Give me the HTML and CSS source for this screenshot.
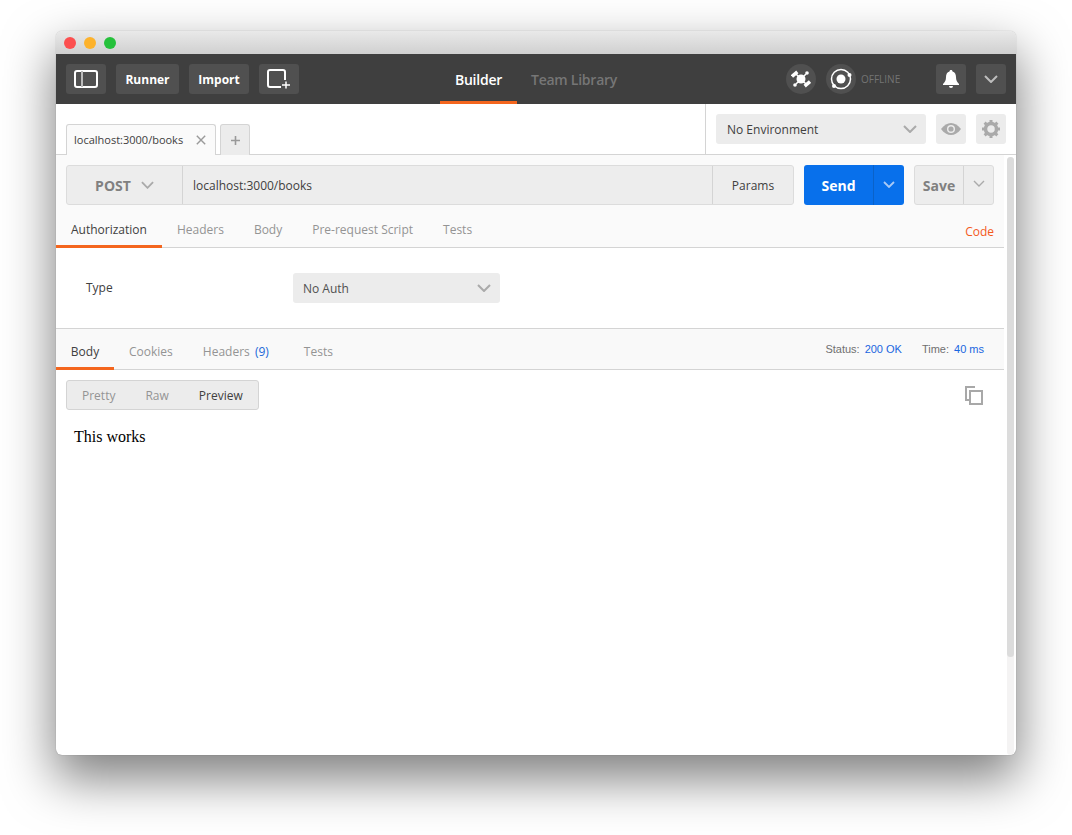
FILE: index.html
```html
<!DOCTYPE html>
<html lang="en">
<head>
<meta charset="utf-8">
<title>Postman</title>
<link rel="stylesheet" href="styles.css">
</head>
<body>
<div class="window">
  <div class="titlebar">
    <span class="light red"></span><span class="light yellow"></span><span class="light green"></span>
  </div>
  <header class="toolbar">
    <div class="tool-left">
      <button class="tbtn icon-btn"><svg width="24" height="18" viewBox="0 0 24 18" fill="none" stroke="#fff" stroke-width="2"><rect x="1" y="1" width="22" height="16" rx="2"/><path d="M8 1v16" stroke="#bbb"/></svg></button>
      <button class="tbtn text-btn runner">Runner</button>
      <button class="tbtn text-btn import">Import</button>
      <button class="tbtn icon-btn"><svg width="24" height="20" viewBox="0 0 24 20" fill="none" stroke="#fff" stroke-width="2"><path d="M14 18H3a2 2 0 0 1-2-2V3a2 2 0 0 1 2-2h13a2 2 0 0 1 2 2v8"/><path d="M15 16h8M19 12.500v7" stroke-width="1.500"/></svg></button>
    </div>
    <nav class="tool-center">
      <span class="nav-item active">Builder</span>
      <span class="nav-item">Team Library</span>
    </nav>
    <div class="tool-right">
      <span class="round"><svg width="20" height="20" viewBox="0 0 20 20" fill="#fff"><circle cx="10" cy="10" r="4.500"/><path d="M10 10L4 4M10 10l6 6M10 10l-5 5M10 10l5-5" stroke="#fff" stroke-width="1.500"/><rect x="0" y="3.500" width="7" height="3.500" transform="rotate(-40 3.500 5)"/><rect x="13" y="13" width="7" height="3.500" transform="rotate(-40 16.500 15)"/><circle cx="4" cy="16" r="1.800"/><circle cx="16" cy="4" r="1.800"/></svg></span>
      <span class="round second"><svg width="24" height="24" viewBox="0 0 24 24"><circle cx="12" cy="12" r="9.500" fill="none" stroke="#fff" stroke-width="1.500"/><circle cx="12" cy="12" r="4.500" fill="#fff"/><circle cx="20.500" cy="8" r="2" fill="#fff"/><circle cx="5" cy="19" r="2" fill="#fff"/></svg></span>
      <span class="offline">OFFLINE</span>
      <button class="tbtn square bell"><svg width="16" height="18" viewBox="0 0 16 18" fill="#fff"><path d="M8 0c1 0 1.500.7 1.500 1.500C12 2.300 13 4.500 13 7c0 3.500 1 5 3 7v1H0v-1c2-2 3-3.500 3-7 0-2.500 1-4.700 3.500-5.500C6.500.7 7 0 8 0z"/><path d="M6 16h4a2 2 0 0 1-4 0z"/></svg></button>
      <button class="tbtn square"><svg width="14" height="8" viewBox="0 0 14 8" fill="none" stroke="#bdbdbd" stroke-width="2"><path d="M1 1l6 6 6-6"/></svg></button>
    </div>
  </header>
  <div class="tabrow">
    <div class="tabs">
      <div class="tab"><span>localhost:3000/books</span><svg class="close" width="10" height="10" viewBox="0 0 10 10" stroke="#9a9a9a" stroke-width="1.400"><path d="M.8.800l8.400 8.400M9.200.800L.8 9.200"/></svg></div>
      <div class="tab-add"><svg width="9" height="9" viewBox="0 0 9 9" stroke="#999" stroke-width="1.600"><path d="M0 4.500h9M4.500 0v9"/></svg></div>
    </div>
    <div class="env">
      <div class="env-select"><span>No Environment</span><svg width="14" height="8" viewBox="0 0 14 8" fill="none" stroke="#aaa" stroke-width="2"><path d="M1 1l6 6 6-6"/></svg></div>
      <button class="env-btn"><svg width="20" height="12" viewBox="0 0 20 12"><path d="M0 6c3-4 6.500-6 10-6s7 2 10 6c-3 4-6.500 6-10 6S3 10 0 6z" fill="#aaa"/><circle cx="10" cy="6" r="4" fill="#ececec"/><circle cx="10" cy="6" r="2.600" fill="#aaa"/></svg></button>
      <button class="env-btn"><svg width="18" height="18" viewBox="0 0 18 18"><circle cx="9" cy="9" r="5.500" fill="none" stroke="#aaa" stroke-width="3.500"/><path d="M9 0v18M0 9h18M2.600 2.600l12.800 12.800M15.400 2.600L2.600 15.400" stroke="#aaa" stroke-width="3" stroke-dasharray="3 12"/></svg></button>
    </div>
  </div>
  <div class="content">
    <main class="panes">
      <section class="request">
        <div class="urlbar">
          <div class="urlgroup">
            <div class="method"><span>POST</span><svg width="13" height="8" viewBox="0 0 14 8" fill="none" stroke="#aaa" stroke-width="2"><path d="M1 1l6 6 6-6"/></svg></div>
            <div class="url">localhost:3000/books</div>
            <div class="params">Params</div>
          </div>
          <div class="send"><span class="send-label">Send</span><span class="send-arrow"><svg width="12" height="7" viewBox="0 0 12 7" fill="none" stroke="#a9c9f5" stroke-width="1.800"><path d="M1 1l5 5 5-5"/></svg></span></div>
          <div class="save"><span class="save-label">Save</span><span class="save-arrow"><svg width="12" height="7" viewBox="0 0 12 7" fill="none" stroke="#aaa" stroke-width="1.400"><path d="M1 1l5 5 5-5"/></svg></span></div>
        </div>
        <div class="subtabs req-tabs">
          <span class="subtab active auth">Authorization</span>
          <span class="subtab">Headers</span>
          <span class="subtab">Body</span>
          <span class="subtab">Pre-request Script</span>
          <span class="subtab">Tests</span>
          <span class="code">Code</span>
        </div>
      </section>
      <section class="auth-pane">
        <span class="type-label">Type</span>
        <div class="auth-select"><span>No Auth</span><svg width="14" height="8" viewBox="0 0 14 8" fill="none" stroke="#aaa" stroke-width="2"><path d="M1 1l6 6 6-6"/></svg></div>
      </section>
      <section class="response">
        <div class="subtabs res-tabs">
          <span class="subtab active body-tab">Body</span>
          <span class="subtab">Cookies</span>
          <span class="subtab headers-tab">Headers <em class="count">(9)</em></span>
          <span class="subtab">Tests</span>
          <div class="meta"><span class="meta-label">Status:</span><span class="meta-value status">200 OK</span><span class="meta-label">Time:</span><span class="meta-value">40 ms</span></div>
        </div>
        <div class="res-tools">
          <div class="modes"><span class="mode">Pretty</span><span class="mode">Raw</span><span class="mode on">Preview</span></div>
          <svg class="copy" width="18" height="19" viewBox="0 0 18 19" fill="none" stroke="#a8a8a8" stroke-width="2"><path d="M10 1H1v13h3"/><rect x="5" y="5" width="12" height="13" fill="#fff"/></svg>
        </div>
        <p class="preview">This works</p>
      </section>
    </main>
    <div class="scrollbar"><div class="thumb"></div></div>
  </div>
</div>
</body>
</html>
```
FILE: styles.css
```css
* { box-sizing: border-box; }
html, body { height: 100%; }
body {
  margin: 0;
  padding: 31px 56px 0;
  background: #fff;
  overflow: hidden;
  font-family: "Open Sans", sans-serif;
}
button { font-family: inherit; border: 0; padding: 0; }
.window {
  width: 960px;
  height: 724px;
  display: flex;
  flex-direction: column;
  background: #fff;
  border-radius: 6px;
  overflow: hidden;
  box-shadow: 0 22px 50px 2px rgba(0,0,0,.5), 0 0 1px rgba(0,0,0,.4);
}
.titlebar {
  height: 23px;
  flex: none;
  display: flex;
  align-items: center;
  gap: 8px;
  padding-left: 8px;
  background: linear-gradient(#e9e9e9, #d0d0d0);
}
.light { width: 12px; height: 12px; border-radius: 50%; }
.red { background: #fc4f4f; }
.yellow { background: #fdb22b; }
.green { background: #25c13b; }
.toolbar {
  height: 50px;
  flex: none;
  display: flex;
  align-items: center;
  justify-content: space-between;
  padding: 0 10px;
  background: #3f3f3f;
  position: relative;
}
.tool-left { display: flex; gap: 10px; }
.tbtn {
  height: 30px;
  background: #505050;
  border-radius: 3px;
  display: flex;
  align-items: center;
  justify-content: center;
  color: #fff;
  font-size: 12px;
  font-weight: 700;
}
.icon-btn { width: 40px; }
.runner { width: 63px; }
.import { width: 60px; }
.tool-center {
  position: absolute;
  left: 384px;
  top: 0;
  height: 50px;
  display: flex;
}
.nav-item {
  height: 50px;
  padding: 0 15px;
  display: flex;
  align-items: center;
  font-size: 14px;
  font-weight: 600;
  letter-spacing: -.25px;
  color: #767676;
}
.nav-item + .nav-item { margin-left: -1px; }
.nav-item.active {
  color: #fff;
  border-bottom: 3px solid #f4661e;
  padding-top: 3px;
}
.tool-right { display: flex; align-items: center; }
.round {
  width: 30px;
  height: 30px;
  border-radius: 50%;
  background: #505050;
  display: flex;
  align-items: center;
  justify-content: center;
}
.round.second { margin-left: 10px; }
.offline {
  width: 75px;
  margin-left: 5px;
  color: #747474;
  font-size: 10px;
}
.square { width: 30px; margin-left: 10px; }
.bell { margin-left: 0; }
.tabrow {
  height: 51px;
  flex: none;
  display: flex;
  justify-content: space-between;
  border-bottom: 1px solid #d4d4d4;
  background: #fff;
}
.tabs {
  display: flex;
  align-items: flex-end;
  gap: 4px;
  padding-left: 10px;
  margin-bottom: -1px;
}
.tab {
  width: 150px;
  height: 31px;
  display: flex;
  align-items: center;
  justify-content: space-between;
  padding: 0 9px 1px 7px;
  background: #fafafa;
  border: 1px solid #d4d4d4;
  border-bottom: 0;
  border-radius: 3px 3px 0 0;
  font-size: 11px;
  color: #404040;
}
.tab-add {
  width: 30px;
  height: 31px;
  display: flex;
  align-items: center;
  justify-content: center;
  background: #ececec;
  border: 1px solid #d4d4d4;
  border-bottom: 0;
  border-radius: 3px 3px 0 0;
}
.env {
  width: 311px;
  display: flex;
  gap: 10px;
  padding: 10px 10px 0;
  border-left: 1px solid #d4d4d4;
}
.env-select {
  width: 210px;
  height: 30px;
  display: flex;
  align-items: center;
  justify-content: space-between;
  padding: 0 9px 0 11px;
  background: #ececec;
  border-radius: 3px;
  font-size: 12px;
  color: #404040;
}
.env-btn {
  width: 30px;
  height: 30px;
  background: #ececec;
  border-radius: 3px;
  display: flex;
  align-items: center;
  justify-content: center;
}
.content { flex: 1; display: flex; min-height: 0; }
.panes { width: 948px; flex: none; display: flex; flex-direction: column; }
.scrollbar {
  flex: 1;
  margin: 2px 2px 0 3px;
  width: 7px;
  background: #f4f3f3;
  border-radius: 4px;
}
.thumb { height: 500px; background: #dcdcdc; border-radius: 4px; }
.request { height: 93px; flex: none; background: #fafafa; }
.urlbar { display: flex; padding: 10px 10px 0; height: 50px; }
.urlgroup {
  width: 728px;
  height: 40px;
  flex: none;
  display: flex;
  background: #ededed;
  border: 1px solid #dcdcdc;
  border-radius: 3px;
}
.method {
  width: 116px;
  display: flex;
  align-items: center;
  justify-content: center;
  gap: 10px;
  border-right: 1px solid #d4d4d4;
  color: #808080;
  font-size: 14px;
  font-weight: 700;
}
.url {
  flex: 1;
  display: flex;
  align-items: center;
  padding-left: 10px;
  color: #404040;
  font-size: 12px;
}
.params {
  width: 81px;
  display: flex;
  align-items: center;
  justify-content: center;
  border-left: 1px solid #d4d4d4;
  color: #404040;
  font-size: 12px;
}
.send {
  width: 100px;
  height: 40px;
  flex: none;
  margin-left: 10px;
  display: flex;
  background: #0870eb;
  border-radius: 3px;
  color: #fff;
  font-size: 14px;
  font-weight: 700;
}
.send-label {
  width: 70px;
  display: flex;
  align-items: center;
  justify-content: center;
  border-right: 1px solid #0a62c8;
}
.send-arrow { flex: 1; display: flex; align-items: center; justify-content: center; padding-bottom: 2px; }
.save {
  width: 80px;
  height: 40px;
  flex: none;
  margin-left: 10px;
  display: flex;
  background: #ededed;
  border: 1px solid #dcdcdc;
  border-radius: 3px;
  color: #808080;
  font-size: 14px;
  font-weight: 700;
}
.save-label {
  width: 49px;
  display: flex;
  align-items: center;
  justify-content: center;
  border-right: 1px solid #d4d4d4;
}
.save-arrow { flex: 1; display: flex; align-items: center; justify-content: center; padding-bottom: 3px; }
.subtabs {
  display: flex;
  height: 43px;
  border-bottom: 1px solid #d4d4d4;
  align-items: stretch;
}
.subtab {
  padding: 8px 15px 0;
  display: flex;
  align-items: center;
  margin-bottom: -1px;
  border-bottom: 3px solid transparent;
  color: #949494;
  font-size: 12px;
}
.subtab.active {
  color: #404040;
  border-bottom-color: #f4661e;
}
.code {
  margin-left: auto;
  padding: 10px 10px 0 0;
  display: flex;
  align-items: center;
  color: #f4591c;
  font-size: 12px;
}
.auth-pane {
  height: 81px;
  flex: none;
  display: flex;
  align-items: flex-start;
  padding: 25px 0 0 30px;
  border-bottom: 1px solid #d4d4d4;
}
.type-label {
  width: 207px;
  height: 30px;
  display: flex;
  align-items: center;
  margin-top: -1px;
  color: #404040;
  font-size: 12px;
}
.auth-select {
  width: 207px;
  height: 30px;
  display: flex;
  align-items: center;
  justify-content: space-between;
  padding: 0 9px 0 10px;
  background: #ececec;
  border-radius: 3px;
  color: #505050;
  font-size: 12px;
}
.response { flex: 1; }
.res-tabs { height: 41px; background: #f9f9f9; }
.res-tabs .subtab { padding-top: 7px; }
.res-tabs .body-tab { width: 58px; justify-content: center; padding-left: 0; padding-right: 0; }
.headers-tab { white-space: pre; margin-right: 5px; }
.count { font-style: normal; margin-left: 2px; color: #2168d8; }
.meta {
  margin-left: auto;
  padding-right: 20px;
  display: flex;
  align-items: center;
  font-family: "Liberation Sans", Arial, sans-serif;
  font-size: 11px;
}
.meta-label { color: #707070; margin-right: 5px; }
.meta-value { color: #1a66e0; }
.status { margin-right: 20px; }
.res-tools {
  display: flex;
  align-items: center;
  justify-content: space-between;
  padding: 10px 21px 0 10px;
}
.modes {
  width: 193px;
  height: 30px;
  display: flex;
  align-items: center;
  padding-left: 15px;
  gap: 30px;
  background: #ececec;
  border: 1px solid #d4d4d4;
  border-radius: 3px;
}
.mode { color: #949494; font-size: 12px; }
.mode.on { color: #404040; }
.preview {
  margin: 17px 0 0 18px;
  color: #000;
  font-family: "Liberation Serif", "Times New Roman", serif;
  font-size: 16px;
  line-height: 20px;
}
```
